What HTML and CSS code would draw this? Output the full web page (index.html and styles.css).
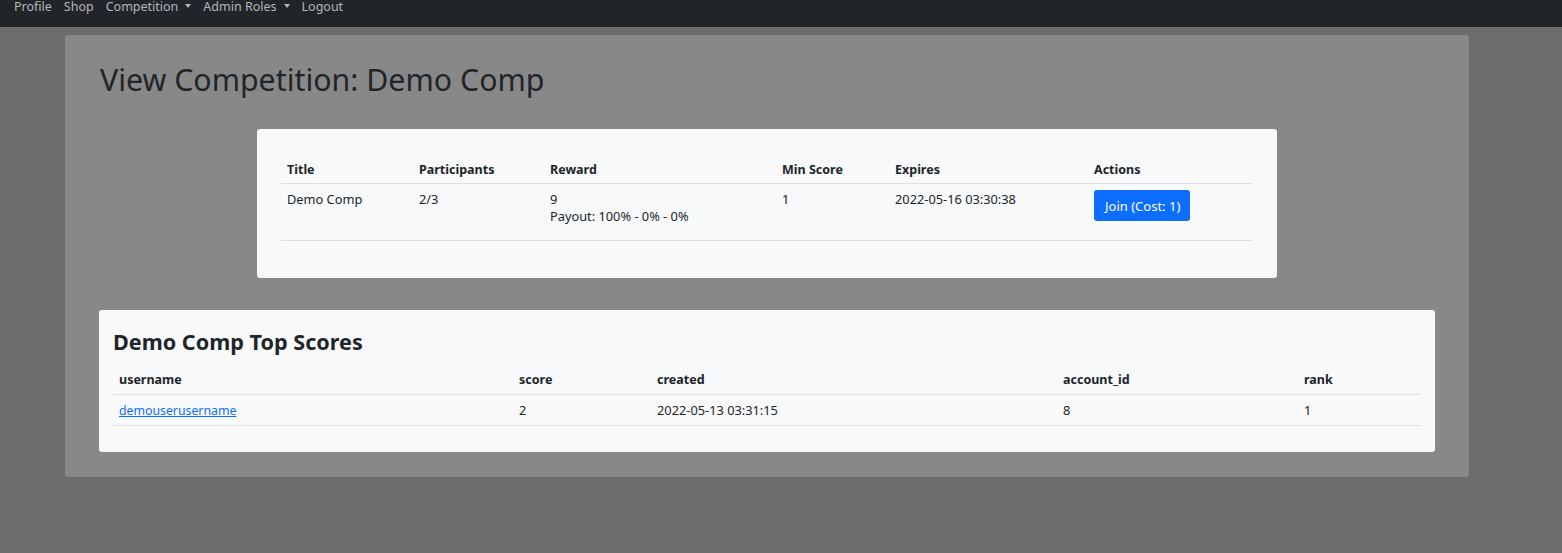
FILE: index.html
```html
<!DOCTYPE html>
<html>
<head>
<meta charset="utf-8">
<link rel="stylesheet" href="styles.css">
</head>
<body>
<nav class="navbar">
  <a class="nav-link">Profile</a>
  <a class="nav-link">Shop</a>
  <a class="nav-link dropdown">Competition</a>
  <a class="nav-link dropdown">Admin Roles</a>
  <a class="nav-link">Logout</a>
</nav>
<main class="page">
  <h1 class="title">View Competition: Demo Comp</h1>
  <section class="card card-comp">
    <table class="tbl tbl-comp">
      <thead>
        <tr>
          <th class="c1">Title</th>
          <th class="c2">Participants</th>
          <th class="c3">Reward</th>
          <th class="c4">Min Score</th>
          <th class="c5">Expires</th>
          <th class="c6">Actions</th>
        </tr>
      </thead>
      <tbody>
        <tr>
          <td>Demo Comp</td>
          <td>2/3</td>
          <td>9<br>Payout: 100% - 0% - 0%</td>
          <td>1</td>
          <td>2022-05-16 03:30:38</td>
          <td><button class="btn">Join (Cost: 1)</button></td>
        </tr>
      </tbody>
    </table>
  </section>
  <section class="card card-scores">
    <h2 class="scores-title">Demo Comp Top Scores</h2>
    <table class="tbl tbl-scores">
      <thead>
        <tr>
          <th class="s1">username</th>
          <th class="s2">score</th>
          <th class="s3">created</th>
          <th class="s4">account_id</th>
          <th class="s5">rank</th>
        </tr>
      </thead>
      <tbody>
        <tr>
          <td><a class="user-link" href="#">demouserusername</a></td>
          <td>2</td>
          <td>2022-05-13 03:31:15</td>
          <td>8</td>
          <td>1</td>
        </tr>
      </tbody>
    </table>
  </section>
</main>
</body>
</html>
```
FILE: styles.css
```css
* { box-sizing: border-box; }
html, body { margin: 0; padding: 0; }
body {
  background: #6c6c6c;
  font-family: "Noto Sans", "Open Sans", sans-serif;
  font-size: 12.8px;
  color: #212529;
  height: 553px;
  overflow: hidden;
}
.navbar {
  background: #212529;
  height: 27px;
  display: flex;
  align-items: flex-start;
  padding: 0 8px;
  margin-bottom: 8px;
}
.nav-link {
  color: #b5b6b8;
  font-size: 12.5px;
  line-height: 13px;
  margin-top: 0;
  padding: 0 6px;
}
.dropdown::after {
  content: "";
  display: inline-block;
  margin-left: 7px;
  vertical-align: 3px;
  border-top: 4px solid #b5b6b8;
  border-left: 3.5px solid transparent;
  border-right: 3.5px solid transparent;
}
.page {
  background: #888888;
  margin: 0 93px 0 65px;
  border-radius: 3px;
  padding: 26px 34px 25px 34px;
}
.title {
  margin: 0 0 30px 1px;
  font-size: 30.3px;
  font-weight: 400;
  line-height: 38px;
  color: #212529;
}
.card {
  background: #f8f9fa;
  border-radius: 3px;
}
.card-comp {
  width: 1020px;
  margin: 0 auto 32px;
  padding: 24px 24px 37px;
}
.tbl {
  width: 100%;
  border-collapse: collapse;
  text-align: left;
}
.tbl th {
  font-size: 12.5px;
  font-weight: 700;
  padding: 8px 6px 4px;
  border-bottom: 1px solid #dee2e6;
  line-height: 18px;
}
.tbl td {
  padding: 6px 6px;
  border-bottom: 1px solid #dee2e6;
  vertical-align: top;
  line-height: 17px;
}
.tbl-comp td { padding: 7px 6px 15px; }
.c1 { width: 132px; }
.c2 { width: 131px; }
.c3 { width: 232px; }
.c4 { width: 113px; }
.c5 { width: 199px; }
.c6 { width: 165px; }
.btn {
  background: #0d6efd;
  color: #fff;
  border: 0;
  border-radius: 3px;
  font-family: inherit;
  font-size: 13px;
  height: 31px;
  padding: 0 10px 0 11px;
  margin-top: -1px;
}
.card-scores {
  padding: 16px 14px 26px;
}
.scores-title {
  margin: 0 0 6px;
  font-size: 21.6px;
  line-height: 32px;
  font-weight: 700;
}
.tbl-scores th { padding: 7px 6px 5px; }
.tbl-scores td { padding: 7px 6px 6px; }
.s1 { width: 400px; }
.s2 { width: 138px; }
.s3 { width: 406px; }
.s4 { width: 241px; }
.s5 { width: auto; }
.user-link { color: #0d6efd; font-size: 12.3px; }
```
